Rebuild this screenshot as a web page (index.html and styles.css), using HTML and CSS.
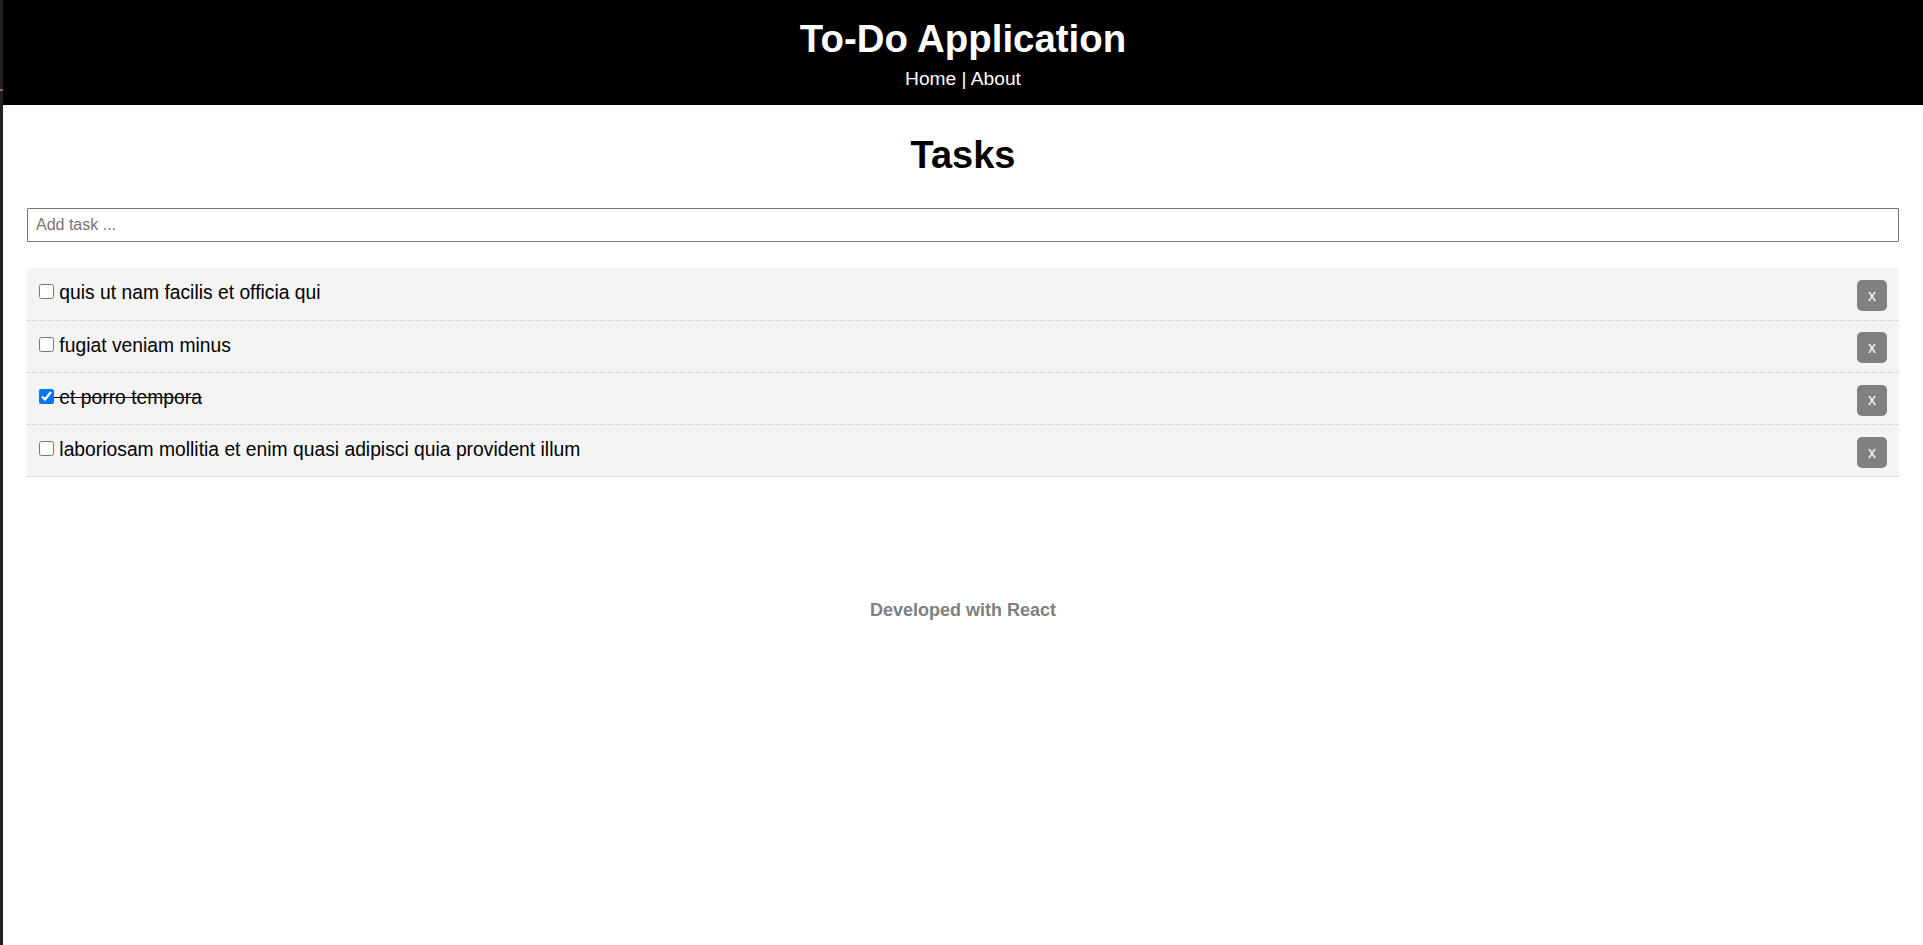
FILE: index.html
```html
<!DOCTYPE html>
<html lang="en">
<head>
<meta charset="utf-8">
<title>To-Do Application</title>
<link rel="stylesheet" href="styles.css">
</head>
<body>
<header class="header">
  <h1 class="app-title">To-Do Application</h1>
  <nav class="nav"><a href="#">Home</a> | <a href="#">About</a></nav>
</header>
<main class="container">
  <h2 class="page-title">Tasks</h2>
  <form class="add-form">
    <input class="add-input" type="text" placeholder="Add task ...">
  </form>
  <div class="task-list">
    <div class="task">
      <p class="task-text"><input type="checkbox"> quis ut nam facilis et officia qui</p>
      <button class="delete-btn" type="button">x</button>
    </div>
    <div class="task">
      <p class="task-text"><input type="checkbox"> fugiat veniam minus</p>
      <button class="delete-btn" type="button">x</button>
    </div>
    <div class="task">
      <p class="task-text done"><input type="checkbox" checked> et porro tempora</p>
      <button class="delete-btn" type="button">x</button>
    </div>
    <div class="task">
      <p class="task-text"><input type="checkbox"> laboriosam mollitia et enim quasi adipisci quia provident illum</p>
      <button class="delete-btn" type="button">x</button>
    </div>
  </div>
  <footer class="footer">Developed with React</footer>
</main>
</body>
</html>
```
FILE: styles.css
```css
html {
  background: linear-gradient(to bottom, #1e2027 0, #1e2027 89px, #c0506a 89px, #c0506a 91px, #1e2027 91px);
  background-color: #1e2027;
}

body {
  margin: 0 0 0 3px;
  min-height: 100vh;
  background: #fff;
  font-family: "Liberation Sans", Arial, sans-serif;
  color: #000;
}

.header {
  background: #000;
  color: #fff;
  text-align: center;
  padding: 16px 0 15px;
}

.app-title {
  margin: 0;
  font-size: 38.4px;
  line-height: 46px;
  font-weight: bold;
}

.nav {
  margin-top: 5px;
  font-size: 19.2px;
  line-height: 23px;
}

.nav a {
  color: #fff;
  text-decoration: none;
}

.container {
  padding: 0 24px;
}

.page-title {
  margin: 27.8px 0 0;
  text-align: center;
  font-size: 38px;
  line-height: 44px;
  font-weight: bold;
}

.add-form {
  margin: 31.5px 0 0;
}

.add-input {
  display: block;
  width: 100%;
  height: 34px;
  box-sizing: border-box;
  border: 1px solid #767676;
  border-radius: 1px;
  padding: 0 8px;
  font-family: "Liberation Sans", Arial, sans-serif;
  font-size: 16px;
  color: #000;
  background: #fff;
}

.add-input::placeholder {
  color: #757575;
}

.task-list {
  margin-top: 26px;
}

.task {
  display: flex;
  align-items: center;
  justify-content: space-between;
  height: 51.3px;
  padding: 0 12px;
  background: #f4f4f4;
  border-bottom: 1px dotted #c8c8c8;
}

.task-text {
  margin: 0 0 2px;
  font-size: 19.3px;
  line-height: 23px;
}

.task-text input {
  width: 15px;
  height: 15px;
  margin: 0 0 1px;
  vertical-align: baseline;
}

.done {
  text-decoration: line-through;
}

.delete-btn {
  width: 30px;
  height: 31px;
  margin-top: 3.4px;
  padding: 0;
  border: 0;
  border-radius: 5px;
  background: #808080;
  color: #fff;
  font-family: "Liberation Sans", Arial, sans-serif;
  font-size: 16px;
  cursor: pointer;
}

.footer {
  margin-top: 121.6px;
  text-align: center;
  color: #808080;
  font-weight: bold;
  font-size: 18px;
  line-height: 22px;
}
```
